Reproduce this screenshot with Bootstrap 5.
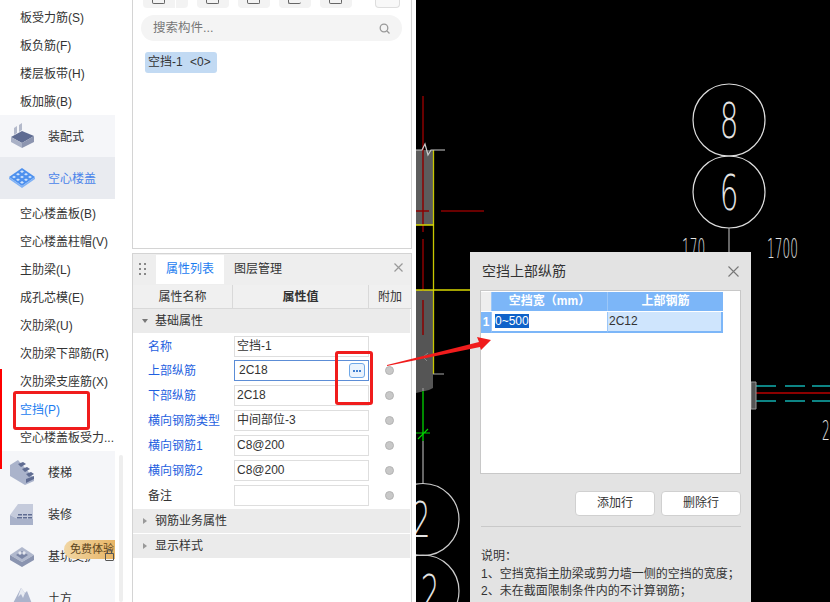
<!DOCTYPE html>
<html lang="zh-CN">
<head>
    <meta charset="UTF-8">
    <meta name="viewport" content="width=device-width, initial-scale=1.0">
    <title>空挡上部纵筋</title>
    <link href="https://cdn.jsdelivr.net/npm/bootstrap@5.3.0/dist/css/bootstrap.min.css" rel="stylesheet">
    <style>
        html, body { height: 602px; overflow: hidden; }
        body { font-family: "Liberation Sans", "Noto Sans CJK SC", sans-serif; font-size: 12px; color: #333; background: #fff; width: 830px; position: relative; }

        /* left menu */
        .side-menu { width: 132px; height: 602px; overflow: hidden; position: relative; flex: none; }
        .side-col { width: 115px; padding-top: 3px; }
        .menu-leaf { height: 28px; line-height: 30px; padding-left: 20px; white-space: nowrap; }
        .menu-leaf.picked { color: #1a7cf0; }
        .menu-group { height: 42px; background: #f5f6f9; display: flex; align-items: center; }
        .menu-group span { padding-top: 2px; }
        .menu-group.open { background: #e9ebf0; color: #4a84ea; }
        .menu-group svg { width: 26px; height: 26px; margin-left: 9px; margin-right: 13px; flex: none; }
        .red-edge { position: absolute; left: 0; top: 369px; width: 1.5px; height: 100px; background: #f00; }
        .side-scroll { position: absolute; left: 119px; top: 455px; width: 4px; height: 147px; background: #eee; border-radius: 2px; }
        .trial-tag { position: absolute; left: 64px; top: 540px; width: 51px; height: 19px; line-height: 19px; padding-left: 6px; font-size: 11px; white-space: nowrap;
            background: linear-gradient(90deg, #f1d6a4, #e8b566); border-radius: 10px 0 0 10px; color: #5d4520; }
        .lock-mark { position: absolute; left: 105px; top: 553px; width: 9px; height: 8px; border: 1px solid #555; border-radius: 1px; }
        .lock-mark::before { content: ""; position: absolute; left: 1px; top: -5px; width: 5px; height: 5px; border: 1px solid #555; border-bottom: 0; border-radius: 3px 3px 0 0; }

        /* middle panels */
        .mid-col { width: 284px; flex: none; padding-right: 4px; height: 602px; background: #fff; }
        .comp-panel { height: 249px; border: 1px solid #d4d4d4; border-top: 0; position: relative; width: 280px; }
        .tool-row { display: flex; height: 8px; padding-left: 10px; }
        .tool-btn { background: #f3f3f3; border-radius: 0 0 4px 4px; height: 8px; width: 32px; margin-right: 9px; position: relative; }
        .tool-btn.wide { width: 45px; background: linear-gradient(90deg, #f3f3f3 32px, #fff 32px, #fff 33px, #f3f3f3 33px); }
        .tool-btn.last { width: 25px; margin-left: 14px; margin-right: 0; border: 1px solid #ddd; border-top: 0; background: #f8f8f8; }
        .tool-btn i { position: absolute; left: 9px; top: 0; width: 13px; height: 4px; border: 1px solid #666; border-top: 0; border-radius: 0 0 2px 2px; }
        .search-pill { margin: 7px 9px 0 8px; height: 26px; border-radius: 13px; background: #f4f4f4; display: flex; align-items: center; justify-content: space-between; padding: 0 12px; color: #777; font-size: 12.5px; }
        .chip-item { display: inline-block; margin: 11px 0 0 12px; height: 21px; line-height: 21px; padding: 0 4px 0 3px; width: 72px; white-space: nowrap; background: #c2daf3; border-radius: 3px; }
        .chip-item span { margin-left: 4px; }
        .prop-panel { margin-top: 4px; height: 349px; border: 1px solid #d4d4d4; border-bottom: 0; width: 280px; }
        .prop-tabs { height: 31px; background: #eeeeee; display: flex; align-items: flex-end; position: relative; }
        .grip-dots { width: 23px; padding-left: 6px; align-self: center; }
        .tab-on { width: 68px; height: 29px; line-height: 29px; background: #fff; color: #1a7cf0; text-align: center; margin-bottom: 1px; }
        .tab-off { width: 68px; height: 29px; line-height: 29px; text-align: center; margin-bottom: 1px; }
        .close-x { position: absolute; right: 8px; top: 9px; }
        .prop-head { display: flex; height: 24px; line-height: 25px; background: #f0f0f0; border-bottom: 1px solid #d9d9d9; text-align: center; }
        .prop-head div:nth-child(1) { width: 100px; border-right: 1px solid #d9d9d9; }
        .prop-head div:nth-child(2) { width: 136px; border-right: 1px solid #d9d9d9; font-weight: 700; }
        .prop-head div:nth-child(3) { width: 42px; }
        .prop-section { height: 24px; line-height: 24px; background: #ebebeb; display: flex; align-items: center; width: 277px; }
        .prop-section.first { margin-top: 1px; }
        .prop-section.second { margin-top: 1px; }
        .tri-down { width: 0; height: 0; border: 3px solid transparent; border-top: 4px solid #777; border-bottom: 0; margin: 0 7px 0 9px; }
        .tri-right { width: 0; height: 0; border: 3px solid transparent; border-left: 4px solid #999; border-right: 0; margin: 0 8px 0 10px; }
        .prop-line { height: 25px; display: flex; align-items: center; }
        .prop-line.top-line { height: 23px; margin-top: 2px; }
        .prop-name { width: 101px; padding-left: 15px; color: #1f5fe0; white-space: nowrap; }
        .prop-name.plain { color: #333; }
        .prop-val { width: 135px; height: 21px; line-height: 19px; border: 1px solid #dedede; padding-left: 2px; background: #fff; white-space: nowrap; position: relative; }
        .prop-val.focus-on { border-color: #5c8dd6; padding-left: 4px; }
        .more-btn { position: absolute; right: 3px; top: 2px; width: 16px; height: 15px; border: 1px solid #6fa8e8; border-radius: 3px; background: #eaf3fd; display: flex; align-items: center; justify-content: center; gap: 1px; }
        .more-btn i { width: 2px; height: 2px; background: #3f7fd0; display: block; }
        .round-dot { width: 9px; height: 9px; border-radius: 50%; background: #c8c8c8; border: 1px solid #b4b4b4; margin-left: 16px; flex: none; }

        /* canvas + dialog */
        .cad-area { position: absolute; left: 416px; top: 0; width: 414px; height: 602px; background: #000; }
        .cad-area svg { display: block; }
        .bar-dialog { position: absolute; left: 470px; top: 252px; width: 281px; height: 350px; background: #e3e3e3; }
        .dlg-title { height: 38px; line-height: 38px; padding-left: 12px; font-size: 14px; display: flex; justify-content: space-between; align-items: center; padding-right: 12px; }
        .grid-box { margin: 0 10px; width: 261px; height: 184px; background: #fff; border: 1px solid #c8c8c8; padding-top: 1px; }
        .grid-row { display: flex; }
        .grid-stub { width: 10px; height: 19px; background: #eee; }
        .grid-hcell { width: 116px; height: 19px; line-height: 19px; background: #7cb6f8; color: #fff; font-weight: 700; text-align: center; border-left: 1px solid #9cc7f8; }
        .grid-num { width: 10px; height: 21px; line-height: 21px; background: #7cb6f8; color: #fff; font-weight: 700; text-align: center; margin-top: 1px; }
        .grid-cell { width: 116px; height: 21px; line-height: 19px; margin-top: 1px; border-left: 1px solid #9cc7f8; border-bottom: 2px solid #7cb6f8; padding-left: 3px; }
        .grid-cell.tint { background: #cfe5fd; border-right: 2px solid #7cb6f8; padding-left: 1px; }
        .grid-cell span { background: #0f62c9; color: #fff; }
        .dlg-actions { display: flex; justify-content: flex-end; gap: 6px; padding: 17px 10px 0 0; }
        .dlg-btn { width: 80px; height: 25px; line-height: 23px; background: #fff; border: 1px solid #d0d0d0; border-radius: 4px; text-align: center; }
        .dlg-rule { margin: 10px 10px 0 11px; height: 1px; background: #c9c9c9; }
        .dlg-note { padding: 21px 0 0 11px; line-height: 17.5px; white-space: nowrap; }

        /* red markup drawn on the screenshot */
        .mark-box { position: absolute; border: 3px solid #f01c1c; border-radius: 3px; }
        .mark-one { left: 335px; top: 351px; width: 38px; height: 54px; }
        .mark-two { left: 13px; top: 391px; width: 77px; height: 39px; }
        .mark-arrow { position: absolute; left: 380px; top: 330px; }
    </style>
</head>
<body class="d-flex">

<div class="side-menu">
    <div class="side-col">
        <div class="menu-leaf">板受力筋(S)</div>
        <div class="menu-leaf">板负筋(F)</div>
        <div class="menu-leaf">楼层板带(H)</div>
        <div class="menu-leaf">板加腋(B)</div>
        <div class="menu-group">
            <svg viewBox="0 0 26 26"><path d="M2 14l11-6 12 5-12 7z" fill="#5f6c92"/><path d="M2 14v5l11 6v-5z" fill="#a9b1c6"/><path d="M13 20v5l12-6v-6z" fill="#8c95b0"/><path d="M5 5l3-2v7l-3 2zM10 2l3-2v7l-3 2z" fill="#b4bacb"/></svg>
            <span>装配式</span>
        </div>
        <div class="menu-group open">
            <svg viewBox="0 0 26 26"><path d="M0 12L13 3l13 9-13 9z" fill="#4d90ee"/><path d="M0 12v2l13 9v-2zM13 21v2l13-9v-2z" fill="#7fb1f5"/><path d="M3 12l2-1.300 2 1.300-2 1.300zM7 14.700l2-1.300 2 1.300-2 1.300zM11 17.400l2-1.300 2 1.300-2 1.300zM7 9.300l2-1.300 2 1.300-2 1.300zM11 12l2-1.300 2 1.300-2 1.300zM15 14.700l2-1.300 2 1.300-2 1.300zM11 6.600l2-1.300 2 1.300-2 1.300zM15 9.300l2-1.300 2 1.300-2 1.300zM19 12l2-1.300 2 1.300-2 1.300z" fill="#cfe2fb"/></svg>
            <span>空心楼盖</span>
        </div>
        <div class="menu-leaf">空心楼盖板(B)</div>
        <div class="menu-leaf">空心楼盖柱帽(V)</div>
        <div class="menu-leaf">主肋梁(L)</div>
        <div class="menu-leaf">成孔芯模(E)</div>
        <div class="menu-leaf">次肋梁(U)</div>
        <div class="menu-leaf">次肋梁下部筋(R)</div>
        <div class="menu-leaf">次肋梁支座筋(X)</div>
        <div class="menu-leaf picked">空挡(P)</div>
        <div class="menu-leaf">空心楼盖板受力...</div>
        <div class="menu-group">
            <svg viewBox="0 0 26 26"><path d="M1 6l8-5 16 18v3l-9 4-15-9z" fill="#aab3cb"/><path d="M9 5l5-2 3 2-5 3zM13 10l5-2 3 2-5 3zM17 15l5-2 3 2-5 3zM17 20l8-3v3l-8 4z" fill="#5f6c92"/></svg>
            <span>楼梯</span>
        </div>
        <div class="menu-group">
            <svg viewBox="0 0 26 26"><path d="M1 14L9 3h15v15H9z" fill="#c5cbdc"/><path d="M1 14v10h23v-6H9z" fill="#a9b2ca"/><path d="M9 13h4v1.500H9zM14 13h4v1.500h-4zM19 13h4v1.500h-4zM8 16h5v1.500H8zM14 16h4v1.500h-4zM19 16h4v1.500h-4z" fill="#5f6c92"/></svg>
            <span>装修</span>
        </div>
        <div class="menu-group">
            <svg viewBox="0 0 26 26"><path d="M1 12l12-8 12 8-12 7z" fill="#b0b8cd"/><path d="M1 12v5l12 7v-5zM13 19v5l12-7v-5z" fill="#8a94b0"/><path d="M7 12l6-4 6 4-6 4z" fill="#7a85a5"/><circle cx="11" cy="10" r="1.700" fill="#e4e7ef"/><circle cx="15" cy="10" r="1.700" fill="#e4e7ef"/></svg>
            <span>基坑支护</span>
        </div>
        <div class="menu-group">
            <svg viewBox="0 0 26 26"><path d="M1 24L12 3l4 5 2-2 7 18z" fill="#aab3cb"/><path d="M12 3l4 5-2 5-2-4-3 3z" fill="#e8ebf2"/></svg>
            <span>土方</span>
        </div>
    </div>
    <div class="red-edge"></div>
    <div class="side-scroll"></div>
    <div class="trial-tag">免费体验</div>
    <div class="lock-mark"></div>
</div>

<div class="mid-col">
    <div class="comp-panel">
        <div class="tool-row">
            <div class="tool-btn wide"><i></i></div>
            <div class="tool-btn"><i></i></div>
            <div class="tool-btn"><i></i></div>
            <div class="tool-btn"><i class="border-end-0"></i></div>
            <div class="tool-btn"><i></i></div>
            <div class="tool-btn last"></div>
        </div>
        <div class="search-pill">
            <span>搜索构件...</span>
            <svg width="11" height="11" viewBox="0 0 11 11" fill="none" stroke="#999" stroke-width="1.300"><circle cx="5" cy="5" r="3.800"/><path d="M8 8l2.500 2.500"/></svg>
        </div>
        <div class="chip-item">空挡-1 <span>&lt;0&gt;</span></div>
    </div>
    <div class="prop-panel">
        <div class="prop-tabs">
            <div class="grip-dots">
                <svg width="8" height="13" viewBox="0 0 8 13" fill="#888" class="d-block"><rect width="2" height="2"/><rect x="5" width="2" height="2"/><rect y="5" width="2" height="2"/><rect x="5" y="5" width="2" height="2"/><rect y="10" width="2" height="2"/><rect x="5" y="10" width="2" height="2"/></svg>
            </div>
            <div class="tab-on">属性列表</div>
            <div class="tab-off">图层管理</div>
            <svg class="close-x" width="9" height="9" viewBox="0 0 9 9" stroke="#999" stroke-width="1.200"><path d="M.5.5l8 8M8.500.5l-8 8"/></svg>
        </div>
        <div class="prop-head"><div>属性名称</div><div>属性值</div><div>附加</div></div>
        <div class="prop-section"><span class="tri-down"></span>基础属性</div>
        <div class="prop-line top-line"><div class="prop-name">名称</div><div class="prop-val">空挡-1</div></div>
        <div class="prop-line"><div class="prop-name">上部纵筋</div><div class="prop-val focus-on">2C18<span class="more-btn"><i></i><i></i><i></i></span></div><span class="round-dot"></span></div>
        <div class="prop-line"><div class="prop-name">下部纵筋</div><div class="prop-val">2C18</div><span class="round-dot"></span></div>
        <div class="prop-line"><div class="prop-name">横向钢筋类型</div><div class="prop-val">中间部位-3</div><span class="round-dot"></span></div>
        <div class="prop-line"><div class="prop-name">横向钢筋1</div><div class="prop-val">C8@200</div><span class="round-dot"></span></div>
        <div class="prop-line"><div class="prop-name">横向钢筋2</div><div class="prop-val">C8@200</div><span class="round-dot"></span></div>
        <div class="prop-line"><div class="prop-name plain">备注</div><div class="prop-val"></div><span class="round-dot"></span></div>
        <div class="prop-section first"><span class="tri-right"></span>钢筋业务属性</div>
        <div class="prop-section second"><span class="tri-right"></span>显示样式</div>
    </div>
</div>

<div class="cad-area">
    <svg width="414" height="602" viewBox="416 0 414 602" fill="none">
        <path d="M416 150h17v75h-17z" fill="#5c5c5c"/>
        <path d="M416 290h17v98l-4 2-13 3z" fill="#555"/>
        <path d="M423 96v136M423 239v52M423 300v35" stroke="#8b0000" stroke-width="1.500"/>
        <path d="M416 211h13M441 211h43" stroke="#8b0000" stroke-width="1.500"/>
        <path d="M433.500 150v224" stroke="#c8c800" stroke-width="1.300"/>
        <path d="M416 225h18M416 290h54" stroke="#d8d800" stroke-width="1.300"/>
        <path d="M416 150h6l3-6 3 11 3-5h14" stroke="#ccc" stroke-width="1.200"/>
        <path d="M433 374h11" stroke="#aaa" stroke-width="1"/>
        <path d="M428 353l-5 4 4 4" stroke="#888" stroke-width="1"/>
        <path d="M423 388v96" stroke="#888" stroke-width="1.500"/>
        <path d="M423 391v50" stroke="#008a00" stroke-width="2"/>
        <path d="M416 433h14M418 439l10-10" stroke="#00d000" stroke-width="1.200"/>
        <circle cx="729" cy="120" r="36" stroke="#ddd" stroke-width="1.200"/>
        <circle cx="729" cy="192" r="36" stroke="#ddd" stroke-width="1.200"/>
        <path d="M729 228v24" stroke="#aaa" stroke-width="1.200"/>
        <circle cx="423" cy="519.500" r="36" stroke="#ccc" stroke-width="1.200"/>
        <circle cx="423" cy="591" r="36" stroke="#ccc" stroke-width="1.200"/>
        <path d="M751 393h79" stroke="#8b0000" stroke-width="2"/>
        <path d="M756 386h20M785 386h20M812 386h18M756 401h20M785 401h20M812 401h18" stroke="#12b0b0" stroke-width="1.300"/>
        <path d="M751 382h5v27h-5z" fill="#555" stroke="#999"/>
        <g fill="#e4e4e4" font-family="'DejaVu Sans', sans-serif" font-weight="200">
            <text transform="translate(729 138) scale(.6 1)" font-size="49" text-anchor="middle">8</text>
            <text transform="translate(729 210) scale(.6 1)" font-size="49" text-anchor="middle">6</text>
            <text transform="translate(682 258) scale(.45 1)" font-size="27">170</text>
            <text transform="translate(767 258) scale(.45 1)" font-size="27">1700</text>
            <text transform="translate(421 537) scale(.6 1)" font-size="49" text-anchor="middle">2</text>
            <text transform="translate(430 610) scale(.6 1)" font-size="49" text-anchor="middle">2</text>
            <text transform="translate(822 440) scale(.45 1)" font-size="27">2</text>
        </g>
    </svg>
</div>

<div class="bar-dialog">
    <div class="dlg-title">
        <span>空挡上部纵筋</span>
        <svg width="11" height="11" viewBox="0 0 11 11" stroke="#777" stroke-width="1.100"><path d="M.5.5l10 10M10.500.5l-10 10"/></svg>
    </div>
    <div class="grid-box">
        <div class="grid-row">
            <div class="grid-stub"></div>
            <div class="grid-hcell">空挡宽（mm）</div>
            <div class="grid-hcell">上部钢筋</div>
        </div>
        <div class="grid-row">
            <div class="grid-num">1</div>
            <div class="grid-cell"><span>0~500</span></div>
            <div class="grid-cell tint">2C12</div>
        </div>
    </div>
    <div class="dlg-actions">
        <div class="dlg-btn">添加行</div>
        <div class="dlg-btn">删除行</div>
    </div>
    <div class="dlg-rule"></div>
    <div class="dlg-note">说明：<br>1、空挡宽指主肋梁或剪力墙一侧的空挡的宽度；<br>2、未在截面限制条件内的不计算钢筋；</div>
</div>

<div class="mark-box mark-one"></div>
<div class="mark-box mark-two"></div>
<svg class="mark-arrow" width="115" height="40" viewBox="380 330 115 40">
    <path d="M387 365L479 342l-2-5 14 3-10 10-1-3L387 366z" fill="#f01c1c"/>
</svg>

<script src="https://cdn.jsdelivr.net/npm/bootstrap@5.3.0/dist/js/bootstrap.bundle.min.js"></script>
</body>
</html>
